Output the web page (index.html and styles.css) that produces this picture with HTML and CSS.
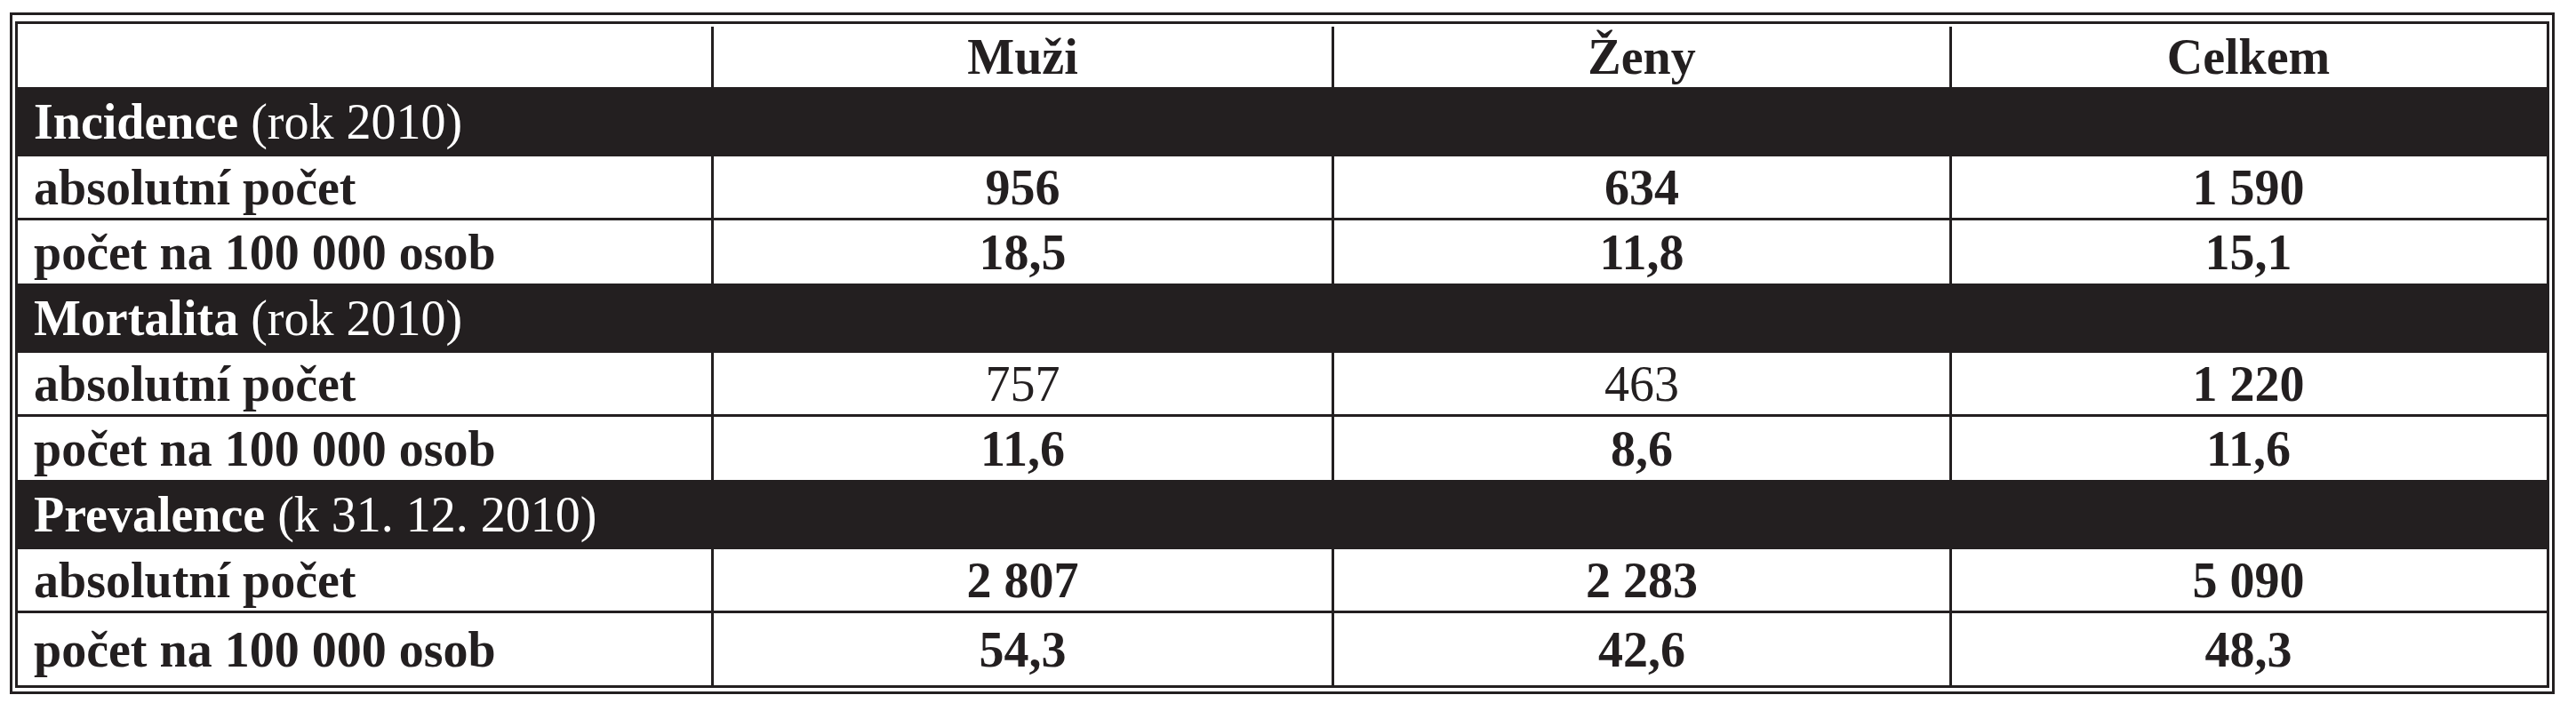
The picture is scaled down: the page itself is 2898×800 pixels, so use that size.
FILE: index.html
```html
<!DOCTYPE html>
<html lang="cs">
<head>
<meta charset="utf-8">
<title>Incidence, mortalita, prevalence</title>
<link rel="stylesheet" href="styles.css">
</head>
<body>
<div class="frame">
  <div class="tbl">
    <div class="row head">
      <div class="cell label"></div>
      <div class="cell">Muži</div>
      <div class="cell">Ženy</div>
      <div class="cell">Celkem</div>
    </div>

    <div class="sec"><b>Incidence</b>&nbsp;<span class="reg">(rok 2010)</span></div>
    <div class="row abs">
      <div class="cell label">absolutní počet</div>
      <div class="cell">956</div>
      <div class="cell">634</div>
      <div class="cell">1 590</div>
    </div>
    <div class="row per">
      <div class="cell label">počet na 100 000 osob</div>
      <div class="cell">18,5</div>
      <div class="cell">11,8</div>
      <div class="cell">15,1</div>
    </div>

    <div class="sec"><b>Mortalita</b>&nbsp;<span class="reg">(rok 2010)</span></div>
    <div class="row abs">
      <div class="cell label">absolutní počet</div>
      <div class="cell reg">757</div>
      <div class="cell reg">463</div>
      <div class="cell">1 220</div>
    </div>
    <div class="row per">
      <div class="cell label">počet na 100 000 osob</div>
      <div class="cell">11,6</div>
      <div class="cell">8,6</div>
      <div class="cell">11,6</div>
    </div>

    <div class="sec"><b>Prevalence</b>&nbsp;<span class="reg">(k 31. 12. 2010)</span></div>
    <div class="row abs">
      <div class="cell label">absolutní počet</div>
      <div class="cell">2 807</div>
      <div class="cell">2 283</div>
      <div class="cell">5 090</div>
    </div>
    <div class="row per last">
      <div class="cell label">počet na 100 000 osob</div>
      <div class="cell">54,3</div>
      <div class="cell">42,6</div>
      <div class="cell">48,3</div>
    </div>
  </div>
</div>
</body>
</html>
```

FILE: styles.css
```css
* { box-sizing: border-box; }

body {
  margin: 0;
  background: #ffffff;
  font-family: "Liberation Serif", "Times New Roman", serif;
  color: #231f20;
}

.frame {
  margin: 14px 0 0 11px;
  width: 2863px;
  border: 3px solid #231f20;
  padding: 7px 3px 4px 3px;
}

.tbl {
  border: 3px solid #231f20;
}

.row {
  display: grid;
  grid-template-columns: 780px 698px 695px 670px;
}

.cell {
  display: flex;
  align-items: center;
  justify-content: center;
  font-size: 56px;
  font-weight: bold;
  white-space: nowrap;
}

.cell + .cell {
  border-left: 3px solid #231f20;
}

.cell.label {
  justify-content: flex-start;
  padding-left: 18px;
}

.reg {
  font-weight: normal;
}

.head {
  height: 71px;
  padding-top: 3px;
}

.sec {
  height: 78px;
  background: #231f20;
  color: #ffffff;
  display: flex;
  align-items: center;
  padding-left: 18px;
  font-size: 56px;
  white-space: nowrap;
}

.abs {
  height: 72px;
  border-bottom: 3px solid #231f20;
}

.per {
  height: 71px;
}

.per.last {
  height: 81px;
}
```
